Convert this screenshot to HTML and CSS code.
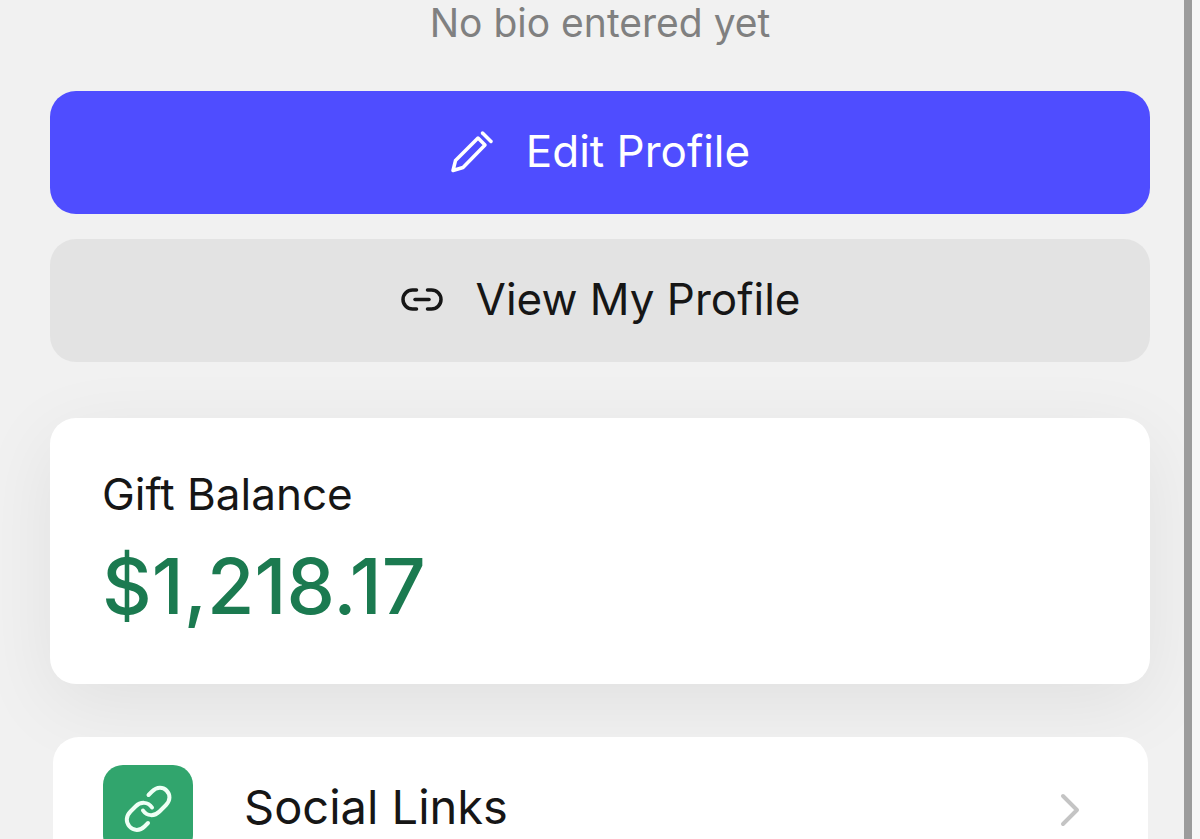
FILE: index.html
```
<!DOCTYPE html>
<html lang="en">
<head>
  <meta charset="UTF-8">
  <meta name="viewport" content="width=device-width, initial-scale=1.0">
  <title>Profile</title>
  <link rel="stylesheet" href="styles.css">
</head>
<body>
  <main class="screen">
    <p class="bio">No bio entered yet</p>

    <div class="actions">
      <button type="button" class="btn btn-primary">
        <svg viewBox="0 0 44 44" class="btn-icon" aria-hidden="true">
          <path d="M3 40.500L5.500 30.500L28 8L35 15L13 37.500Z"/>
          <path d="M32.500 3L41 11.500"/>
        </svg>
        Edit Profile
      </button>
      <button type="button" class="btn btn-secondary">
        <svg viewBox="0 0 44 44" class="btn-icon" aria-hidden="true">
          <path d="M16.500 12H12.500A9.500 9.500 0 0 0 12.500 31H16.500"/>
          <path d="M27.500 12H31.500A9.500 9.500 0 0 1 31.500 31H27.500"/>
          <path d="M15 21.500H29"/>
        </svg>
        View My Profile
      </button>
    </div>

    <section class="card balance">
      <h2>Gift Balance</h2>
      <p class="amount">$1,218.17</p>
    </section>

    <nav class="card menu">
      <a href="#social-links" class="menu-item">
        <span class="menu-icon">
          <svg viewBox="0 0 90 90" aria-hidden="true">
            <path d="M45.500 30L49 26.500C54 21.500 60 22 63.500 25.500C67.500 29.500 67.500 35.500 63 40L56.500 46.500C51.500 51.500 44 51.500 40 45.500"/>
            <path d="M49 42.500C45 36.500 37.500 36.500 32.500 41.500L27.500 46.500C23 51 22.500 57 26.500 61.500C30.500 66 37 66 41.500 61.500L45 58"/>
          </svg>
        </span>
        <span class="menu-label">Social Links</span>
        <svg viewBox="0 0 20 34" class="chevron" aria-hidden="true">
          <path d="M3 3L17 17L3 31"/>
        </svg>
      </a>
    </nav>
  </main>
</body>
</html>
```
FILE: styles.css
```
* {
  margin: 0;
  padding: 0;
  box-sizing: border-box;
}

body {
  font-family: Inter, "Liberation Sans", sans-serif;
  background-color: #f7f7f7;
  color: #161616;
}

/* Screen */
.screen {
  height: 100vh;
  margin-right: 8px;
  padding: 0 34px 0 50px;
  border-right: 8px solid #9c9c9c;
  background-color: #f1f1f1;
  overflow: hidden;
}

.bio {
  color: #808080;
  font-size: 39px;
  line-height: 46px;
  text-align: center;
}

/* Buttons */
.actions {
  display: flex;
  flex-direction: column;
  gap: 25px;
  margin: 45px 0 56px;
}

.btn {
  display: flex;
  align-items: center;
  justify-content: center;
  gap: 32px;
  width: 100%;
  padding: 31px 32px 33px;
  border: none;
  border-radius: 26px;
  font-family: inherit;
  font-size: 44px;
  line-height: 59px;
  cursor: pointer;
}

.btn-primary {
  background-color: #4f4dff;
  color: #ffffff;
}

.btn-secondary {
  background-color: #e3e3e3;
  color: #161616;
}

.btn-icon {
  width: 44px;
  height: 44px;
  fill: none;
  stroke: currentColor;
  stroke-width: 3.5;
  stroke-linecap: round;
  stroke-linejoin: round;
}

/* Cards */
.card {
  border-radius: 26px;
  background-color: #ffffff;
}

.balance {
  padding: 46px 52px 50px;
  box-shadow: 0 20px 80px rgba(0, 0, 0, 0.07);
}

.balance h2 {
  font-size: 44px;
  font-weight: 400;
  line-height: 60px;
}

.amount {
  margin-top: 14px;
  color: #1b7a50;
  font-size: 77px;
  font-weight: 500;
  line-height: 96px;
}

/* Menu */
.menu {
  position: relative;
  margin: 53px 2px 0 3px;
}

.menu-item {
  display: flex;
  align-items: center;
  padding: 28px 68px 28px 50px;
  color: inherit;
  text-decoration: none;
}

.menu-icon {
  width: 90px;
  height: 90px;
  border-radius: 20px;
  background-color: #31a56d;
}

.menu-icon svg {
  display: block;
  fill: none;
  stroke: #effff5;
  stroke-width: 4;
  stroke-linecap: round;
}

.menu-label {
  flex: 1;
  margin-left: 51px;
  padding-bottom: 6px;
  font-size: 47px;
  line-height: 60px;
}

.chevron {
  width: 20px;
  height: 34px;
  fill: none;
  stroke: #c4c4c4;
  stroke-width: 4;
  stroke-linecap: round;
  stroke-linejoin: round;
}
```
